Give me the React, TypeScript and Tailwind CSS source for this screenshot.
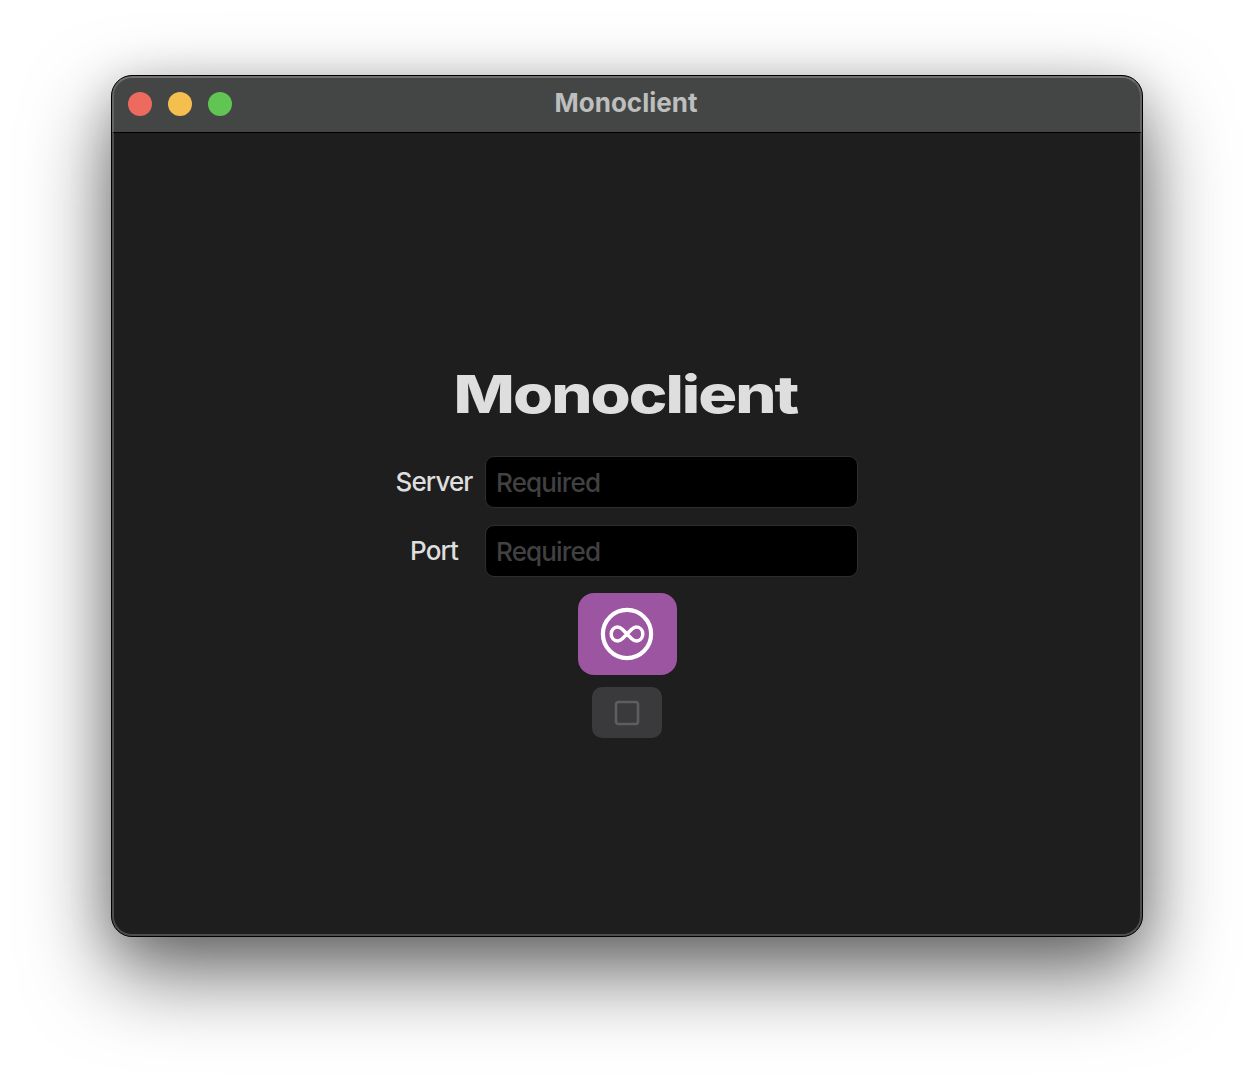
type FieldProps = { label: string; spacing: string };

function Field({ label, spacing }: FieldProps) {
  return (
    <label className={`flex h-[52px] items-center ${spacing}`}>
      <span className="flex w-[76px] justify-center text-[26px] leading-8 font-[450] tracking-[-0.9px] whitespace-nowrap text-[#dedede]">
        {label}
      </span>
      <input
        placeholder="Required"
        className="ml-[13px] h-[52px] w-[373px] rounded-[9px] border border-[#2e2e2e] bg-black px-[10px] text-[26px] font-[450] tracking-[-0.85px] text-[#dedede] outline-none placeholder:text-[#414141]"
      />
    </label>
  );
}

export default function App() {
  return (
    <div className="h-[1084px] w-[1254px] overflow-hidden bg-white px-[111px] pt-[75px] font-['Inter',sans-serif]">
      <main className="flex h-[862px] w-[1032px] flex-col rounded-[21px] border border-black bg-black shadow-[0_36px_84px_rgba(0,0,0,0.58),0_8px_44px_rgba(0,0,0,0.16)]">
        <header className="flex h-[57px] shrink-0 items-center rounded-t-[20px] border-x-2 border-t-2 border-b border-x-[#636564] border-t-[#707271] border-b-black bg-[#444645] pl-[14px]">
          <div className="flex w-[104px] gap-4 pb-[2px]">
            <span className="size-6 rounded-full bg-[#ed6a5f]" />
            <span className="size-6 rounded-full bg-[#f5bf4f]" />
            <span className="size-6 rounded-full bg-[#61c554]" />
          </div>
          <h1 className="flex-1 pr-[120px] pb-[4px] text-center text-[26px] leading-8 font-bold tracking-[0px] text-[#bdbebe]">
            Monoclient
          </h1>
        </header>

        <section className="flex flex-1 flex-col items-center rounded-b-[20px] border-x-2 border-b-2 border-[#4d4d4d] bg-[#1e1e1e] pt-[228px]">
          <h2 className="mr-[2px] scale-x-[1.25] text-[52px] leading-[68px] font-[760] tracking-[-1.6px] text-[#dedede]">
            Monoclient
          </h2>
          <Field label="Server" spacing="mt-[27px]" />
          <Field label="Port" spacing="mt-[17px]" />
          <button
            aria-label="Connect"
            className="mt-4 flex h-[82px] w-[99px] items-center justify-center rounded-[16px] bg-[#9b55a1]"
          >
            <svg width="54" height="54" viewBox="0 0 54 54" fill="none" stroke="white">
              <circle cx="27" cy="27" r="24.1" strokeWidth="4.2" />
              <path
                d="M27 27L22.3 22.2C20.8 20.8 19.2 20.1 17.5 20.1C13.9 20.1 11.2 23.1 11.2 27C11.2 30.9 13.9 33.9 17.5 33.9C19.2 33.9 20.8 33.2 22.3 31.8L31.7 22.2C33.2 20.8 34.8 20.1 36.5 20.1C40.1 20.1 42.8 23.1 42.8 27C42.8 30.9 40.1 33.9 36.5 33.9C34.8 33.9 33.2 33.2 31.7 31.8Z"
                strokeWidth="3.5"
                strokeLinejoin="round"
              />
            </svg>
          </button>
          <button
            aria-label="Stop"
            disabled
            className="mt-3 flex h-[51px] w-[70px] items-center justify-center rounded-[10px] bg-[#3a3a3c]"
          >
            <svg width="26" height="26" viewBox="0 0 26 26" fill="none">
              <rect x="2" y="2" width="22" height="22" rx="2.5" stroke="#5e5e60" strokeWidth="2.6" />
            </svg>
          </button>
        </section>
      </main>
    </div>
  );
}
